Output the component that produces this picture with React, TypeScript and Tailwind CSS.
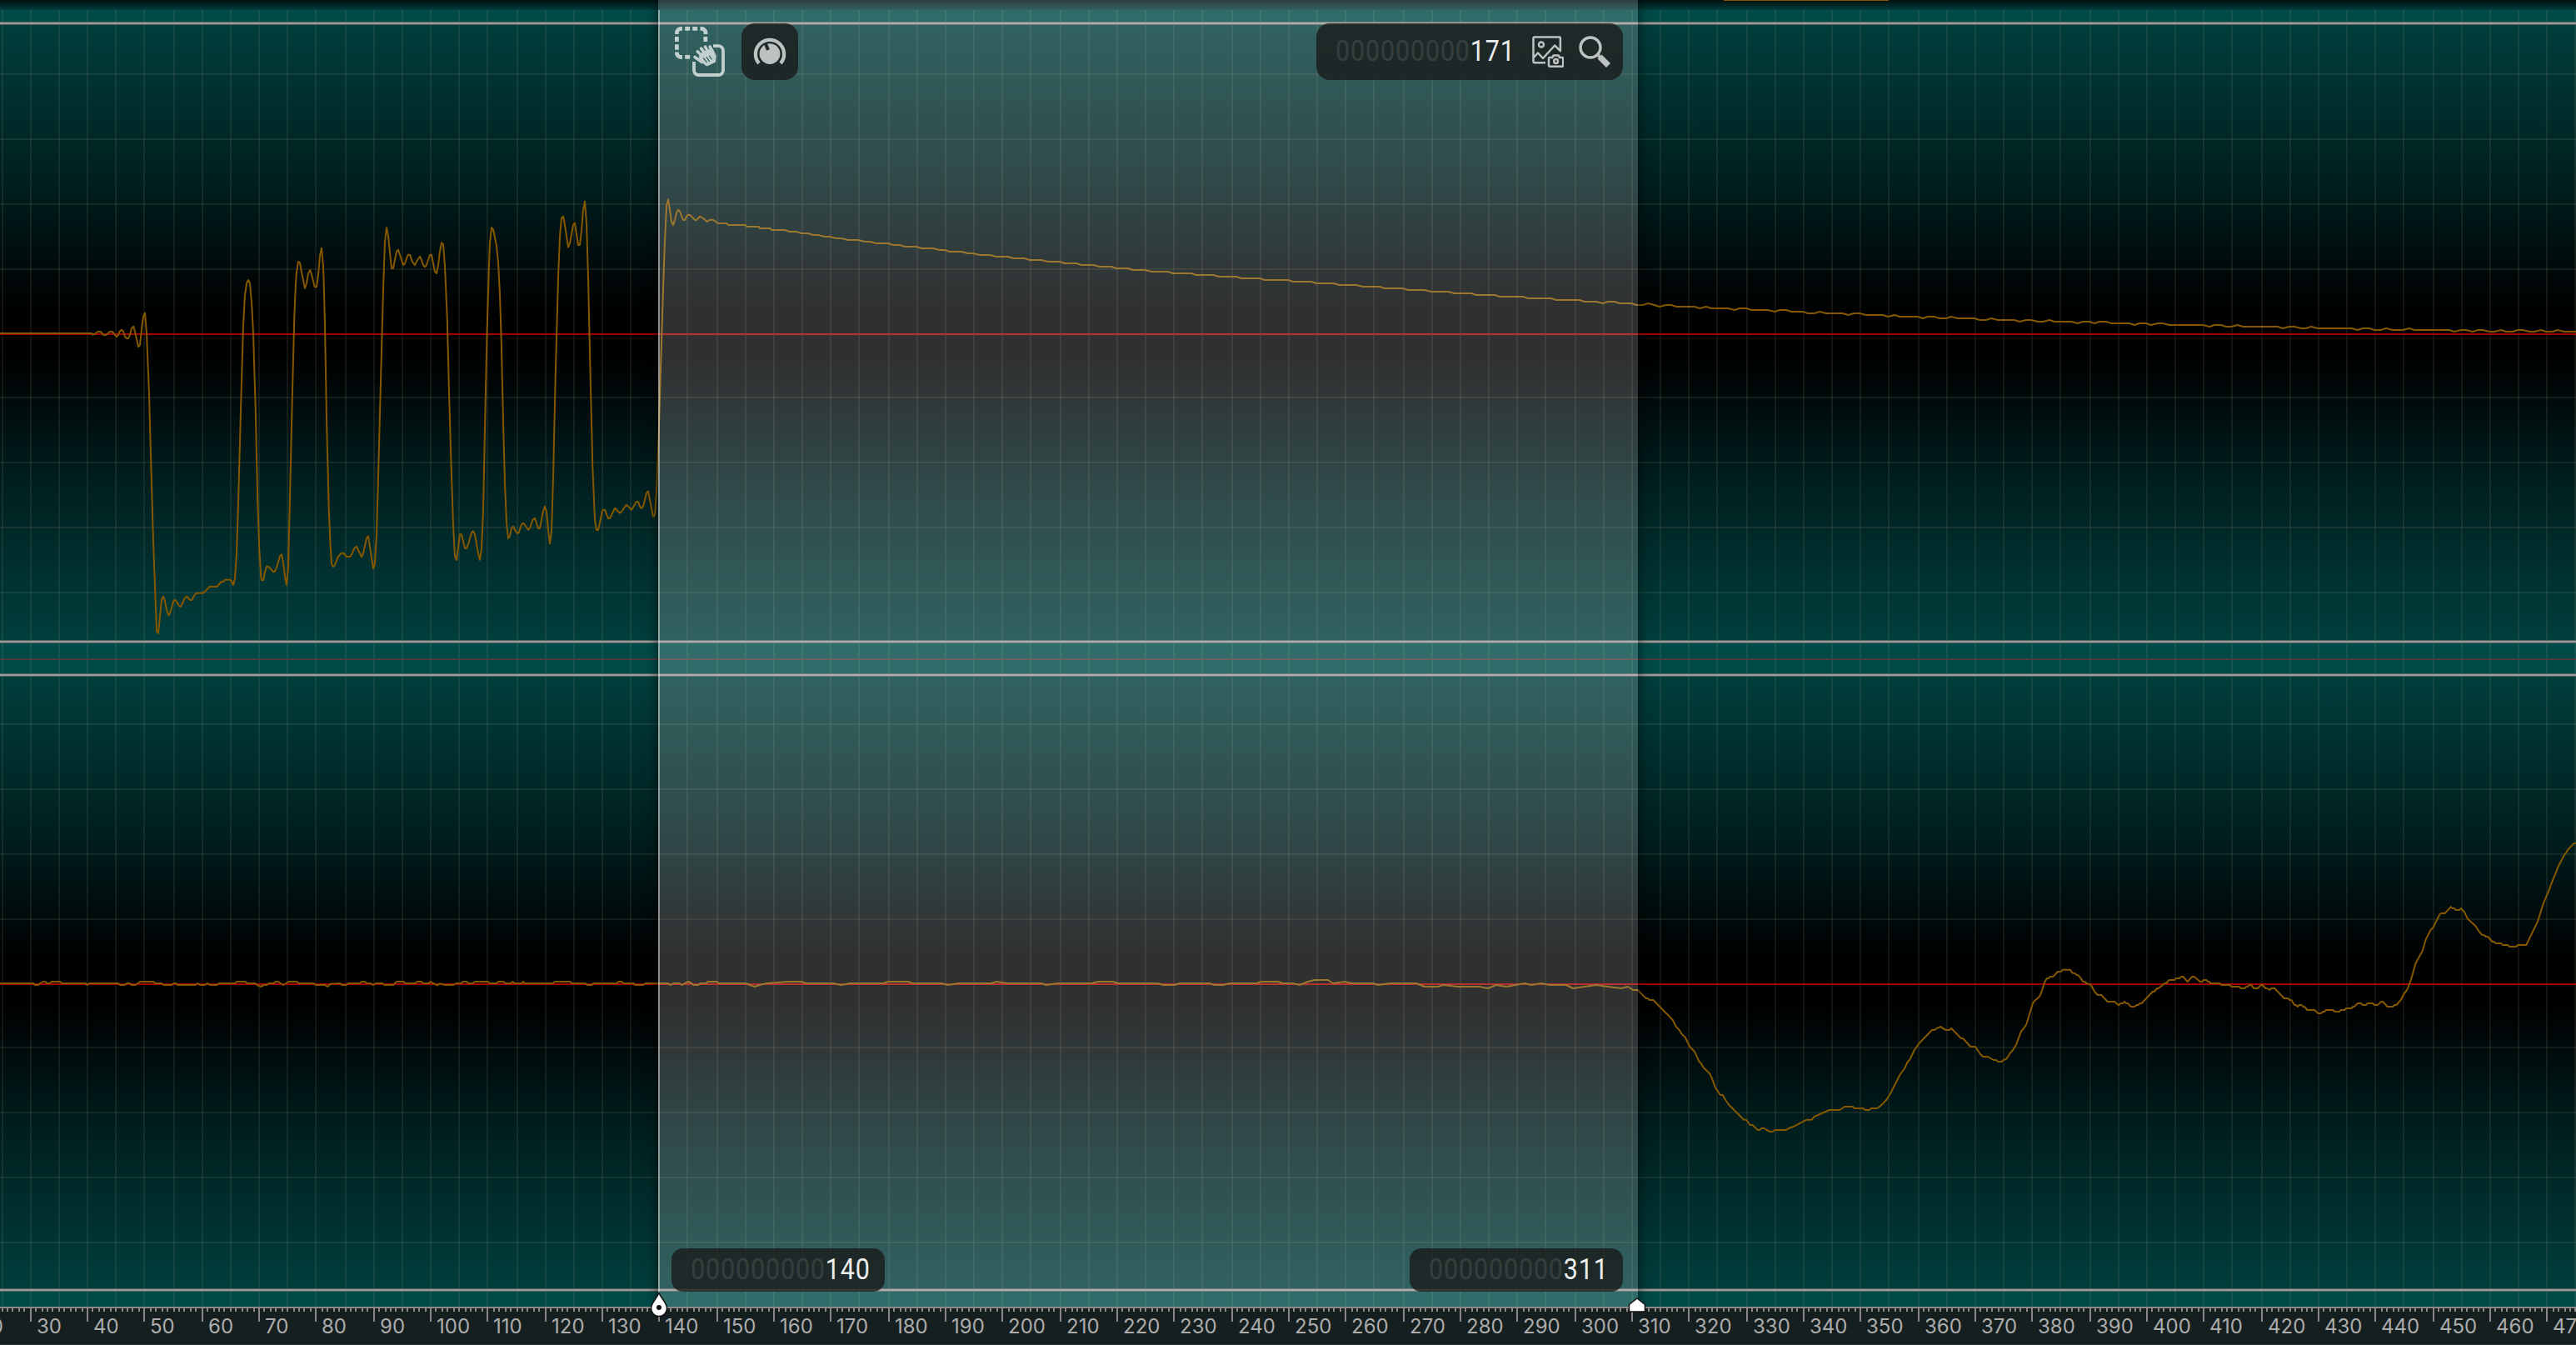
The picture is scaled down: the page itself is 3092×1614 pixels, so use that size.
const WIDTH = 3092;
const PT = 2;
const UNIT = 3.433;
const ORIGIN = 18.2;

type Segment = { x: number; y: number; sx: number; sy: number; d: string };

// sample index -> device pixel, snapped to whole points
const sampleX = (n: number) => Math.floor(ORIGIN + (n - 30) * UNIT) * PT;

const range = (from: number, to: number, step = 1) => {
  const out: number[] = [];
  for (let n = from; n <= to; n += step) out.push(n);
  return out;
};

const toPoints = (segments: Segment[]) =>
  segments
    .flatMap((s) =>
      s.d
        .trim()
        .split(/\s+/)
        .map((p) => {
          const [a, b] = p.split(',').map(Number);
          return `${(s.x + a / s.sx).toFixed(1)},${(s.y + b / s.sy).toFixed(1)}`;
        })
    )
    .join(' ');

const upper: Segment[] = [
  { x: 0, y: 0, sx: 1, sy: 1, d: '0,400 110,400' },
  {
    x: 80, y: 340, sx: 3, sy: 3,
    d: `95,185 104,180 112,174 122,174 133,186 141,186 150,179 155,174 164,174 180,192 185,187 190,175 198,167 204,173 210,192 216,198 222,198 228,185 234,162 241,155 245,170 258,228 264,222 270,165 276,120 282,107 288,180 297,400 303,620 312,930 324,1252 330,1260 342,1138 348,1127 354,1145 360,1175 367,1195 372,1188 384,1145 390,1139 396,1145 402,1157 409,1164 415,1157 425,1133 432,1127 445,1140 451,1140 462,1120 468,1115 492,1115 515,1092 541,1092 557,1074 565,1074 570,1067 589,1067 594,1073 600,1086 606,1062 612,970 618,790 624,570 630,350 636,150 642,42 648,0 654,-12 660,0 666,70 672,180 680,450 688,790 694,960 700,1060 703,1069 708,1069 714,1040 720,1019 726,1019 744,1038 750,1038 757,1020 768,982 774,976 780,1005 787,1060 792,1086 798,1020 806,680 812,420 820,120 825,0 828,-40 834,-78 840,-74 846,-40 858,18 864,0 870,-36 877,-48 885,-20 893,13 900,13 906,-30 912,-100 918,-127 924,-60 926,0 930,150 936,490 944,810 950,950 954,1010 960,1020 966,1014 978,983 990,971 997,971 1008,984 1020,984 1026,977 1035,955 1044,947 1050,960 1062,985 1068,973 1080,917`,
  },
  {
    x: 440, y: 220, sx: 3, sy: 3,
    d: `6,1270 24,1387 30,1368 36,1270 44,980 52,680 60,380 66,210 72,160 78,190 84,250 90,306 96,306 108,245 114,239 120,257 132,294 138,288 144,270 150,257 156,257 164,281 174,295 180,281 192,263 198,276 204,294 210,301 216,294 228,257 234,257 246,318 252,324 258,294 264,245 270,214 276,220 282,300 290,480 297,750 304,990 312,1230 318,1343 324,1356 336,1264 342,1264 354,1314 360,1314 366,1300 378,1258 384,1252 390,1264 402,1332 408,1356 414,1314 420,1180 428,780 434,520 440,320 444,214 450,160 456,166 468,226 474,285 480,400 485,560 492,860 498,1080 504,1222 510,1278 516,1270 522,1241 528,1235 534,1247 542,1260 548,1258 558,1228 564,1223 570,1230 582,1247 588,1241 598,1212 606,1205 618,1242 624,1242 636,1180 642,1163 648,1182 654,1245 660,1297 666,1254 672,1060 680,700 690,340 696,190 702,125 708,119 714,150 726,230 732,215 744,150 750,143 762,222 768,222 774,170 780,95 786,65 792,145 798,340 806,700 814,1020 818,1120 822,1210 828,1248 834,1248 840,1222 848,1182 852,1175 858,1175 870,1206 876,1206 894,1169 912,1187 918,1182 936,1157 954,1175 972,1146 978,1146 984,1163 990,1170 996,1163 1008,1115 1014,1108 1020,1140 1032,1200 1038,1194 1044,1110 1052,900 1060,640 1068,380 1074,210 1080,82 1086,58 1092,95 1098,138 1104,151 1110,132 1116,106 1122,95 1128,101 1140,132 1146,132 1155,115 1164,113 1183,132 1189,131 1200,119 1212,126 1226,138 1236,131 1248,131 1265,143 1298,144 1302,150 1364,150 1368,156 1412,156 1416,162 1454,162 1458,168 1495,168`,
  },
];

const decay = [
  [938, 276], [986, 283], [1035, 289.5], [1085, 295], [1183, 306], [1282, 316], [1380, 325], [1479, 332.5], [1577, 339],
  [1676, 346], [1775, 353.5], [1873, 359.5], [1966, 365], [2071, 370], [2169, 374.5], [2268, 379], [2366, 382.5],
  [2465, 385.5], [2563, 388.5], [2662, 391], [2761, 393], [2859, 395], [2958, 396.5], [3056, 397.5], [3092, 398],
];

const decayPoints = () => {
  const out: string[] = [];
  let k = 0;
  for (let n = 162; n <= 481; n++) {
    const x = sampleX(n);
    while (k < decay.length - 2 && x > decay[k + 1][0]) k++;
    const [x0, y0] = decay[k];
    const [x1, y1] = decay[k + 1];
    const wobble = x > 1900 ? Math.sin(n * 1.9) * 0.8 : 0;
    const y = Math.round((y0 + ((x - x0) / (x1 - x0)) * (y1 - y0) + wobble) / PT) * PT;
    out.push(`${x},${y}`);
  }
  return out.join(' ');
};

const lower: Segment[] = [
  {
    x: 0, y: 1140, sx: 1.742, sy: 3,
    d: `0,120 70,120 73,126 80,126 84,120 90,114 95,114 98,120 104,120 108,114 126,114 130,120 179,120 182,126 187,120 247,120 251,126 261,126 265,120 271,120 275,126 283,126 293,114 321,114 325,120 338,120 342,126 359,126 363,120 368,120 372,126 408,126 413,120 418,126 428,126 433,120 440,126 454,126 458,120 491,120 495,114 513,114 517,120 534,120 538,126 545,132 552,126 558,126 562,120 572,120 576,114 582,114 592,126 598,120 603,114 621,114 625,120 656,120 660,126 679,126 685,132 691,122 711,120 715,126 724,126 728,120 752,120 756,114 763,114 767,120 775,120 780,126 786,120 800,120 804,126 822,126 829,114 844,114 848,120 868,120 872,114 881,114 885,120 896,120 900,114 906,120 914,127 920,121 931,126 948,126 953,120 964,120 968,114 976,114 980,120 988,120 993,114 1020,114 1025,120 1038,120 1042,114 1053,114 1057,120 1068,120 1072,114 1076,120 1091,120 1094,114 1098,120 1156,120 1160,114 1192,114 1196,120 1224,120 1228,126 1237,126 1241,120 1290,120 1293,114 1300,114 1304,120 1325,120 1328,126 1345,126 1350,120 1397,120 1402,126 1408,120 1421,120 1426,126 1432,120 1439,114 1446,120 1450,126 1460,126 1464,120 1476,120 1480,114 1499,114 1503,120 1560,120`,
  },
  {
    x: 0, y: 0, sx: 1, sy: 1,
    d: `900,1182 906,1184 912,1182 920,1180 946,1178 962,1178 968,1180 1000,1180 1010,1182 1020,1180 1060,1180 1066,1178 1090,1178 1096,1180 1130,1180 1138,1182 1150,1180 1190,1180 1196,1178 1210,1180 1250,1180 1256,1182 1270,1180 1310,1180 1318,1178 1336,1178 1342,1180 1390,1180 1396,1182 1410,1182 1416,1180 1452,1180 1458,1182 1468,1182 1476,1180 1508,1180 1514,1178 1534,1178 1540,1180 1552,1180 1560,1182 1570,1178 1578,1176 1594,1176 1600,1180 1614,1178 1622,1180 1648,1180 1654,1182 1668,1180 1700,1180 1710,1184 1726,1184 1732,1182 1750,1184 1776,1184 1786,1186 1796,1182 1808,1184 1830,1180 1838,1182 1850,1180 1860,1182 1880,1182 1888,1186 1902,1184 1916,1182 1930,1184 1946,1186 1954,1184 1960,1188`,
  },
  {
    x: 1960, y: 1120, sx: 2.613, sy: 3,
    d: `0,204 15,204 41,234 47,234 52,240 64,240 125,312 136,337 145,347 154,364 164,374 178,407 194,427 208,462 214,468 221,483 241,505 249,525 258,554 274,582 282,582 290,599 301,617 348,671 355,671 368,690 375,690 392,708 398,708 402,702 412,702 420,708 430,714 438,714 446,708 481,708 488,702 505,695 545,671 560,671 569,660 604,642 616,636 649,636 664,624 690,624 695,630 723,630 728,636 741,636 747,630 765,630 775,623 795,600 808,576 837,510 852,486 862,462 868,455 883,420 897,397 938,348 946,348 956,340 960,340 965,335 972,342 982,348 993,348 999,342 1029,378 1035,378 1059,408 1074,408 1089,434 1098,444 1113,444 1131,456 1139,456 1145,462 1157,462 1162,456 1169,454 1175,446 1184,430 1192,420 1202,401 1218,352 1224,345 1234,328 1254,253 1260,243 1275,228 1281,214 1291,177 1298,163 1304,161 1309,156 1319,155 1332,138 1343,137 1348,131 1371,131 1379,143 1387,144 1391,150 1397,151 1404,160 1411,173 1418,175 1424,181 1431,182 1438,188 1448,211 1458,222 1469,222 1489,246 1511,246 1523,259 1530,252 1537,252 1541,246`,
  },
  {
    x: 2500, y: 980, sx: 2.649, sy: 3,
    d: `132,666 138,672 143,672 153,684 165,684 171,678 177,678 181,672 187,672 222,630 227,630 236,618 241,618 260,600 265,600 275,588 292,588 296,582 307,582 313,576 319,576 333,594 348,576 354,576 373,594 379,594 384,588 393,588 398,594 402,594 407,600 436,600 440,606 468,606 472,612 498,612 502,618 514,618 520,612 525,612 529,606 535,606 544,618 556,618 567,606 572,606 581,618 586,618 594,624 599,618 610,618 640,654 653,654 657,660 663,660 673,678 678,678 683,684 688,678 696,678 700,684 705,684 714,696 737,696 748,708 758,708 763,702 769,702 773,696 796,696 801,702 816,702 820,696 832,696 837,690 854,690 859,684 863,684 874,672 885,672 890,678 900,678 906,672 922,672 927,678 937,678 949,666 954,666 969,684 986,684 991,678 997,678 1011,660 1021,638 1031,624 1044,586 1058,529 1080,483 1091,441 1106,408 1114,399 1135,351 1139,348 1151,348 1167,329 1170,324 1174,330 1181,330 1186,336 1198,336 1202,330 1213,343 1224,368 1249,394 1257,409 1270,426 1277,427 1281,432 1288,432 1302,450 1307,450 1313,456 1331,456 1335,462 1352,462 1356,468 1378,468 1383,462 1410,462 1446,378 1465,311 1485,258 1489,243 1505,200 1510,184 1531,137 1536,132 1543,118 1562,96 1568,96`,
  },
];

const gridRows = [88, 166, 244, 322, 476, 554, 632, 710];

function Lane({ top, bottom, center, offset }: { top: number; bottom: number; center: number; offset: number }) {
  return (
    <g>
      {gridRows.map((y) => (
        <rect key={y} x={0} y={y + offset} width={WIDTH} height={2} fill="#d2be96" fillOpacity={0.1} />
      ))}
      <rect x={0} y={center} width={WIDTH} height={2} fill="#a80000" />
      {[top, bottom].map((y) => (
        <g key={y}>
          <rect x={0} y={y} width={WIDTH} height={4} fill="#4f6160" />
          <rect x={0} y={y + 1} width={WIDTH} height={2} fill="#9b9b9b" />
        </g>
      ))}
    </g>
  );
}

function Waveforms() {
  return (
    <svg className="block" width={WIDTH} height={1568} viewBox={`0 0 ${WIDTH} 1568`}>
      <defs>
        <linearGradient id="lane" x1="0" y1="0" x2="0" y2="1">
          <stop offset="0" stopColor="#003e3c" />
          <stop offset="0.25" stopColor="#002020" />
          <stop offset="0.4" stopColor="#00090a" />
          <stop offset="0.47" stopColor="#000000" />
          <stop offset="0.53" stopColor="#000000" />
          <stop offset="0.6" stopColor="#00090a" />
          <stop offset="0.75" stopColor="#002020" />
          <stop offset="1" stopColor="#003e3c" />
        </linearGradient>
        <linearGradient id="topFade" x1="0" y1="0" x2="0" y2="1">
          <stop offset="0" stopColor="#001110" />
          <stop offset="1" stopColor="#003d3b" />
        </linearGradient>
      </defs>
      <rect width={WIDTH} height={1568} fill="#004a48" />
      <rect width={WIDTH} height={12} fill="url(#topFade)" />
      <rect y={28} width={WIDTH} height={742} fill="url(#lane)" />
      <rect y={810} width={WIDTH} height={738} fill="url(#lane)" />
      {range(25, 475, 5).map((n) => (
        <rect key={n} x={sampleX(n)} y={12} width={2} height={1556} fill="#d2be96" fillOpacity={0.1} />
      ))}
      <Lane top={26} bottom={768} center={400} offset={0} />
      <Lane top={808} bottom={1546} center={1180} offset={780} />
      <rect y={790} width={WIDTH} height={2} fill="#4a3c40" />
      <rect x={2069} width={198} height={1} fill="#855800" />
      <g fill="none" stroke="#855800" strokeWidth={2} strokeLinejoin="round">
        <polyline points={`${toPoints(upper)} ${decayPoints()}`} />
        <polyline points={toPoints(lower)} />
      </g>
    </svg>
  );
}

function MoveSelectionIcon() {
  return (
    <svg className="mt-1 size-[60px] opacity-75" viewBox="0 0 60 60" fill="none" stroke="#f2f5f5">
      <path
        strokeWidth={4.8}
        d="M2.4 9V7.4a5 5 0 0 1 5-5H9M12.2 2.4h6M21.2 2.4h6M30.5 2.4H32a5 5 0 0 1 5 5V9M36.8 12v6M2.4 12v6M2.4 21.3v6.4M2.4 30.5V31a5 5 0 0 0 5 5.5H9M12.2 36.4h6"
      />
      <path strokeWidth={3.8} d="M46 23.2h6.5a5.5 5.5 0 0 1 5.5 5.5V52.5a5.5 5.5 0 0 1-5.5 5.5H28.5a5.5 5.5 0 0 1-5.5-5.5V42" />
      <g fill="#f2f5f5" strokeLinejoin="round" strokeLinecap="round">
        <path strokeWidth={3.2} d="M32 40.500l6.500 5.200 9-4.200.6-6.300-3.400-7.200-10.200 3-4 5z" />
        <path strokeWidth={3.6} d="M24 36.500l8.500 6M27.200 29.800l8 8M31.500 26.200l7 9M36.500 24.200l5.500 9M42.200 24l3.800 9" />
      </g>
      <path className="stroke-[#315f5d]" strokeWidth={1.3} strokeLinecap="round" d="M34.5 38l3.8 4.6M38.2 36.8l3.200 4.600M41.500 35l2.500 4" />
    </svg>
  );
}

function KnobIcon() {
  return (
    <svg className="mt-1 size-[40px]" viewBox="0 0 40 40" fill="none">
      <path stroke="#bcc1c1" strokeWidth={4.3} d="M7 32A17.100 17.100 0 1 1 33 32" />
      <circle cx={20} cy={20.600} r={12.400} fill="#bcc1c1" />
      <path stroke="#202c2b" strokeWidth={4} d="M15 8.800l3 7.200" />
    </svg>
  );
}

function SnapshotIcon() {
  return (
    <svg className="size-[38px]" viewBox="0 0 38 38" fill="none" stroke="#bcc1c1" strokeWidth={2.5} strokeLinejoin="round">
      <path d="M16 32.3H2.7a1.2 1.2 0 0 1-1.200-1.200V2.700a1.200 1.200 0 0 1 1.200-1.200h30a1.200 1.200 0 0 1 1.200 1.200v15.500L27.200 11.500 13 27 7 20.500 1.500 26.500" />
      <circle cx={11} cy={10.5} r={3} />
      <path d="M20 27.200a1.200 1.200 0 0 1 1.200-1.200h3l1.500-2.500h5.800l1.500 2.500h3a1.200 1.200 0 0 1 1.200 1.200v8.300a1.200 1.200 0 0 1-1.200 1.200H21.200a1.200 1.200 0 0 1-1.200-1.200z" />
      <circle cx={28.6} cy={30.5} r={2.4} />
    </svg>
  );
}

function SearchIcon() {
  return (
    <svg className="size-[38px]" viewBox="0 0 38 38" fill="none" stroke="#bcc1c1">
      <circle cx={14} cy={14} r={12} strokeWidth={3.4} />
      <path strokeWidth={3.5} d="M22.5 22.5l4 4" />
      <path strokeWidth={7} strokeLinejoin="round" d="M25 25l10.5 10.5" />
    </svg>
  );
}

function Counter({ value }: { value: number }) {
  const digits = String(value);
  return (
    <span className="block w-[216px] origin-left scale-x-[0.87] whitespace-nowrap font-['Roboto',sans-serif] text-[35px] leading-[52px] font-normal tracking-[1px] text-[#eceeee] tabular-nums">
      <span className="text-white/10">{'0'.repeat(12 - digits.length)}</span>
      {digits}
    </span>
  );
}

function Ruler() {
  return (
    <svg className="block" width={WIDTH} height={46} viewBox={`0 0 ${WIDTH} 46`}>
      <rect width={WIDTH} height={46} fill="#161f20" />
      <rect width={WIDTH} height={2} fill="#8c8888" />
      <rect y={45} width={WIDTH} height={1} fill="#2a3338" />
      {range(20, 475).map((n) => (
        <rect key={n} x={sampleX(n)} y={0} width={2} height={n % 10 === 0 ? 18 : 6} fill="#8c8888" />
      ))}
      <g fill="#acacac" className="font-['Inter',sans-serif] text-[24px]">
        {range(20, 470, 10).map((n) => (
          <text key={n} x={sampleX(n) + 8} y={32}>
            {n}
          </text>
        ))}
      </g>
    </svg>
  );
}

export default function App() {
  return (
    <div className="relative flex h-[1614px] w-[3092px] flex-col overflow-hidden bg-[#161f20]">
      <div className="relative h-[1568px] overflow-hidden">
        <Waveforms />
        <div className="absolute inset-y-0 left-[790px] flex w-[1176px] flex-col justify-between bg-white/19 pt-7 pr-[18px] pb-[18px] pl-4 shadow-[0_0_14px_rgba(0,0,0,0.6)]">
          <div className="absolute top-3 bottom-0 left-0 w-0.5 bg-white/40" />
          <div className="flex items-start justify-between">
            <div className="flex gap-5 pl-1">
              <MoveSelectionIcon />
              <div className="flex size-[68px] items-center justify-center rounded-2xl bg-[#1b1c1c]/82">
                <KnobIcon />
              </div>
            </div>
            <div className="flex h-[68px] w-[368px] items-center rounded-2xl bg-[#1b1c1c]/82 pr-[15px] pl-[23px]">
              <Counter value={171} />
              <div className="ml-auto flex gap-[18px]">
                <SnapshotIcon />
                <SearchIcon />
              </div>
            </div>
          </div>
          <div className="flex justify-between">
            {[140, 311].map((value) => (
              <div key={value} className="h-[52px] w-[256px] rounded-[14px] bg-[#1b1c1c]/82 pl-[23px]">
                <Counter value={value} />
              </div>
            ))}
          </div>
        </div>
      </div>
      <Ruler />
      <svg className="absolute top-[1550px] left-[779px]" width={24} height={32} viewBox="0 0 24 32">
        <path
          d="M12 1.5C14.5 8 21.5 13.5 21.5 20a9.5 9.5 0 0 1-19 0C2.5 13.5 9.5 8 12 1.5z"
          fill="#fff"
          stroke="#111"
          strokeWidth={1.5}
        />
        <circle cx={12} cy={19} r={3} fill="#111" />
      </svg>
      <svg className="absolute top-[1556px] left-[1953px]" width={24} height={20} viewBox="0 0 24 20">
        <path d="M12 2l9.5 7.5v8.5h-19V9.5z" fill="#fff" stroke="#111" strokeWidth={1.5} />
      </svg>
    </div>
  );
}
